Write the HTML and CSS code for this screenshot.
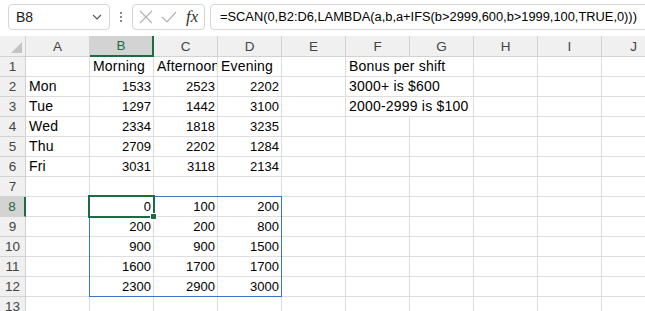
FILE: index.html
```html
<!DOCTYPE html>
<html lang="en">
<head>
    <meta charset="UTF-8">
    <meta name="viewport" content="width=device-width, initial-scale=1.0">
    <title>SCAN bonus</title>
    <link rel="stylesheet" href="styles.css">
</head>
<body>
    <div class="toolbar">
        <div class="namebox">
            <span>B8</span>
            <svg class="chevron" width="10" height="6" viewBox="0 0 10 6"><path d="M1 1 L5 5 L9 1" fill="none" stroke="#555" stroke-width="1.1"/></svg>
        </div>
        <div class="grip"><i></i><i></i><i></i></div>
        <div class="fxbox">
            <svg width="14" height="14" viewBox="0 0 14 14"><path d="M1 1 L13 13 M13 1 L1 13" stroke="#b4b4b4" stroke-width="1.2" fill="none"/></svg>
            <svg width="16" height="14" viewBox="0 0 16 14"><path d="M1 7 L6 12 L15 2" stroke="#b4b4b4" stroke-width="1.2" fill="none"/></svg>
            <span class="fx">fx</span>
        </div>
        <div class="formula">=SCAN(0,B2:D6,LAMBDA(a,b,a+IFS(b&gt;2999,600,b&gt;1999,100,TRUE,0)))</div>
    </div>

    <div class="sheet">
        <table>
            <colgroup>
                <col class="rh">
                <col><col><col><col><col><col><col><col><col><col>
            </colgroup>
            <tr class="head">
                <th class="corner"></th>
                <th>A</th><th class="sel">B</th><th>C</th><th>D</th><th>E</th>
                <th>F</th><th>G</th><th>H</th><th>I</th><th>J</th>
            </tr>
            <tr>
                <th>1</th><td></td><td>Morning</td><td>Afternoon</td><td>Evening</td><td></td>
                <td colspan="2">Bonus per shift</td><td></td><td></td><td></td>
            </tr>
            <tr>
                <th>2</th><td>Mon</td><td class="n">1533</td><td class="n">2523</td><td class="n">2202</td><td></td>
                <td colspan="2">3000+ is $600</td><td></td><td></td><td></td>
            </tr>
            <tr>
                <th>3</th><td>Tue</td><td class="n">1297</td><td class="n">1442</td><td class="n">3100</td><td></td>
                <td colspan="2">2000-2999 is $100</td><td></td><td></td><td></td>
            </tr>
            <tr>
                <th>4</th><td>Wed</td><td class="n">2334</td><td class="n">1818</td><td class="n">3235</td><td></td>
                <td></td><td></td><td></td><td></td><td></td>
            </tr>
            <tr>
                <th>5</th><td>Thu</td><td class="n">2709</td><td class="n">2202</td><td class="n">1284</td><td></td>
                <td></td><td></td><td></td><td></td><td></td>
            </tr>
            <tr>
                <th>6</th><td>Fri</td><td class="n">3031</td><td class="n">3118</td><td class="n">2134</td><td></td>
                <td></td><td></td><td></td><td></td><td></td>
            </tr>
            <tr>
                <th>7</th><td></td><td></td><td></td><td></td><td></td>
                <td></td><td></td><td></td><td></td><td></td>
            </tr>
            <tr>
                <th class="sel">8</th><td></td><td class="n">0</td><td class="n">100</td><td class="n">200</td><td></td>
                <td></td><td></td><td></td><td></td><td></td>
            </tr>
            <tr>
                <th>9</th><td></td><td class="n">200</td><td class="n">200</td><td class="n">800</td><td></td>
                <td></td><td></td><td></td><td></td><td></td>
            </tr>
            <tr>
                <th>10</th><td></td><td class="n">900</td><td class="n">900</td><td class="n">1500</td><td></td>
                <td></td><td></td><td></td><td></td><td></td>
            </tr>
            <tr>
                <th>11</th><td></td><td class="n">1600</td><td class="n">1700</td><td class="n">1700</td><td></td>
                <td></td><td></td><td></td><td></td><td></td>
            </tr>
            <tr>
                <th>12</th><td></td><td class="n">2300</td><td class="n">2900</td><td class="n">3000</td><td></td>
                <td></td><td></td><td></td><td></td><td></td>
            </tr>
            <tr>
                <th>13</th><td></td><td></td><td></td><td></td><td></td>
                <td></td><td></td><td></td><td></td><td></td>
            </tr>
        </table>

        <!-- spill range B8:D12 and active cell -->
        <div class="spill"></div>
        <div class="active"><span class="handle"></span></div>
    </div>
</body>
</html>
```

FILE: styles.css
```css
html, body {
    margin: 0;
    padding: 0;
    width: 645px;
    height: 311px;
    overflow: hidden;
    background: #fff;
    font-family: "Liberation Sans", Arial, sans-serif;
    color: #000;
}

.toolbar {
    display: flex;
    align-items: flex-start;
    height: 36px;
    padding-top: 4px;
    box-sizing: border-box;
    background: #fff;
}

.namebox {
    display: flex;
    align-items: center;
    justify-content: space-between;
    margin-left: 8px;
    width: 102px;
    height: 26px;
    box-sizing: border-box;
    border: 1px solid #d6d6d6;
    border-radius: 4px;
    padding: 0 7px 0 7px;
    font-size: 14px;
    color: #222;
}

.grip {
    width: 22px;
    height: 26px;
    display: flex;
    flex-direction: column;
    align-items: center;
    justify-content: center;
    gap: 2px;
}

.grip i {
    width: 2px;
    height: 2px;
    background: #8a8a8a;
}

.fxbox {
    display: flex;
    align-items: center;
    gap: 8px;
    width: 73px;
    height: 26px;
    box-sizing: border-box;
    border: 1px solid #d6d6d6;
    border-radius: 4px;
    padding-left: 6px;
}

.fx {
    font-family: "Liberation Serif", "Times New Roman", serif;
    font-style: italic;
    font-size: 17px;
    color: #333;
    margin-left: 1px;
}

.formula {
    flex: 1;
    margin-left: 5px;
    margin-right: -10px;
    height: 26px;
    box-sizing: border-box;
    border: 1px solid #d6d6d6;
    border-radius: 4px;
    padding: 4px 0 0 9px;
    font-size: 12.85px;
    white-space: nowrap;
}

.sheet {
    position: relative;
}

table {
    border-collapse: separate;
    border-spacing: 0;
    table-layout: fixed;
    width: 666px;
    font-size: 14px;
    letter-spacing: 0.2px;
}

col { width: 64px; }
col.rh { width: 26px; }

th, td {
    height: 20px;
    padding: 0 3px;
    box-sizing: border-box;
    border-right: 1px solid #dedede;
    border-bottom: 1px solid #dedede;
    white-space: nowrap;
    overflow: hidden;
    line-height: 19px;
    vertical-align: bottom;
}

td.n {
    text-align: right;
    padding-right: 2px;
    font-size: 13px;
    letter-spacing: 0;
}

th {
    font-weight: normal;
    font-size: 13.5px;
    letter-spacing: 0;
    text-align: center;
    color: #444;
    background: #f0f0f0;
    border-color: #d2d2d2;
    padding: 0;
}

tr.head th {
    height: 21px;
}

th.corner {
    position: relative;
}

th.corner::after {
    content: "";
    position: absolute;
    right: 3px;
    bottom: 3px;
    border-left: 11px solid transparent;
    border-bottom: 11px solid #c4c4c4;
}

tr.head th.sel {
    background: #d3d3d3;
    color: #1d6b40;
    border-bottom: 2px solid #1d6b40;
}

th.sel {
    background: #d3d3d3;
    color: #1d6b40;
    border-right: 2px solid #1d6b40;
}

.spill {
    position: absolute;
    left: 89px;
    top: 160px;
    width: 193px;
    height: 101px;
    box-sizing: border-box;
    border: 1px solid #3a75c4;
}

.active {
    position: absolute;
    left: 88px;
    top: 159px;
    width: 67px;
    height: 23px;
    box-sizing: border-box;
    border: 2px solid #1d6b40;
}

.handle {
    position: absolute;
    right: -4px;
    bottom: -4px;
    width: 5px;
    height: 5px;
    background: #1d6b40;
    border: 1px solid #fff;
}
```
